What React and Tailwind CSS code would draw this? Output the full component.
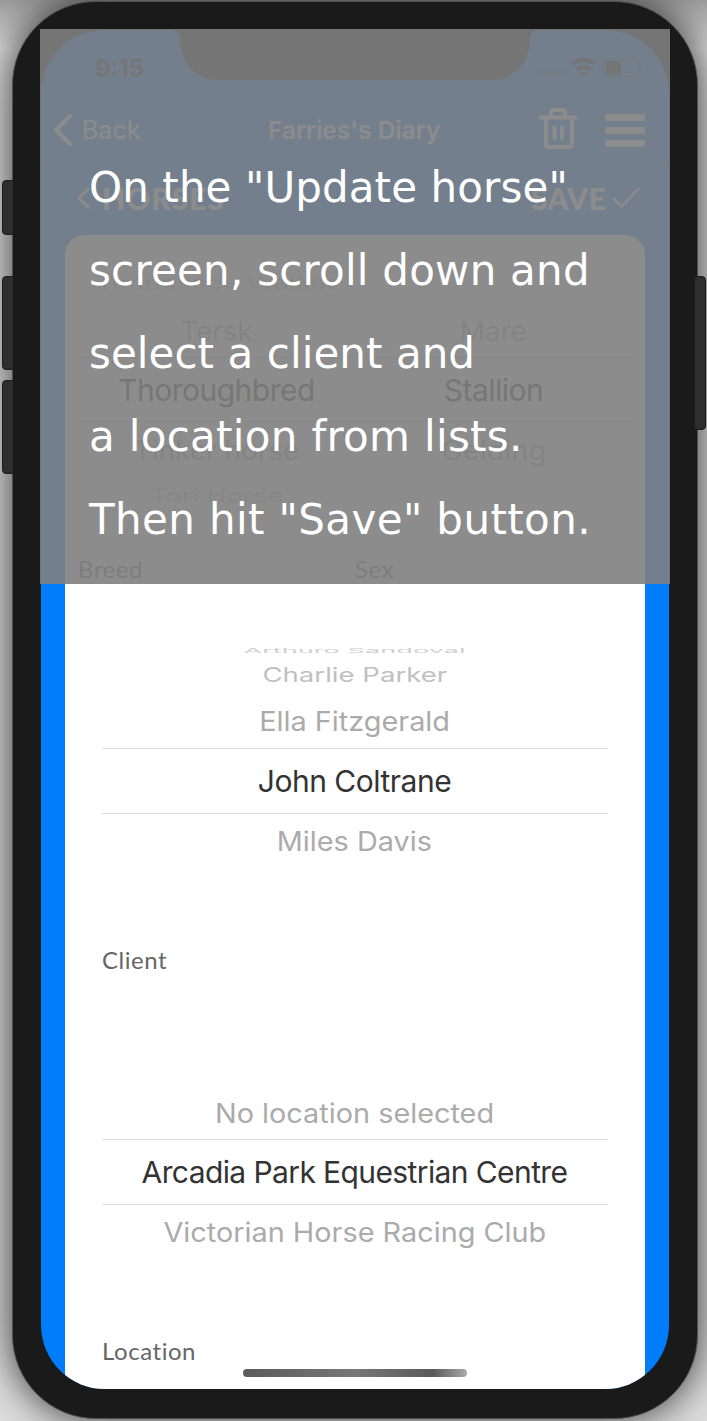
import React from "react";

const sf = "font-['Inter',sans-serif]";
const label = "font-['Lato',sans-serif] text-[24px] leading-none tracking-[0.55px] [font-variant-ligatures:none] text-[#666]";
const near = "scale-x-[1.03] scale-y-[0.96]";

function Row({ h, className = "", children }) {
  return (
    <div className={`flex shrink-0 items-center justify-center whitespace-nowrap ${h}`}>
      <span className={`block ${className}`}>{children}</span>
    </div>
  );
}

function Notch() {
  return (
    <svg className="absolute left-[129px] top-0" width="370" height="50" viewBox="0 0 370 50">
      <path d="M0 0C7 0 10 3 10 9C10 32 25 50 47 50H322C345 50 360 32 360 9C360 3 363 0 370 0Z" fill="#1a1a1a" />
    </svg>
  );
}

function StatusBar() {
  return (
    <div className="relative flex h-[67px] shrink-0 items-center justify-between pl-[54px] pr-[24px] pt-[9px] text-[#1a1a1a]">
      <Notch />
      <span className={`text-[24.500px] font-semibold leading-none ${sf}`}>9:15</span>
      <svg width="110" height="22" viewBox="0 0 110 22" fill="none">
        <g fill="#1a5488">
          <circle cx="3.5" cy="16" r="2.5" /><circle cx="11.5" cy="16" r="2.5" />
          <circle cx="19.5" cy="16" r="2.5" /><circle cx="27.5" cy="16" r="2.5" />
        </g>
        <g stroke="#1a1a1a" strokeWidth="4">
          <path d="M37.500 7.500A16 16 0 0 1 59.500 7.500" />
          <path d="M42 12.500A9.500 9.500 0 0 1 55 12.500" />
        </g>
        <path d="M45 16A5 5 0 0 1 52 16L48.500 19.500Z" fill="#1a1a1a" />
        <rect x="68.500" y="2" width="35" height="17.500" rx="4" stroke="#1a4a70" strokeWidth="1.500" />
        <rect x="71" y="4" width="15" height="13.500" rx="2" fill="#1a1a1a" />
        <path d="M105.500 8Q109 10.500 105.500 13.500Z" fill="#1a4a70" />
      </svg>
    </div>
  );
}

function NavBar() {
  return (
    <div className={`flex h-[67px] shrink-0 items-center border-b border-[#508ab8] text-white ${sf}`}>
      <svg className="ml-[12px] mr-[9px]" width="20" height="34" viewBox="0 0 20 34" fill="none" stroke="currentColor" strokeWidth="4" strokeLinecap="round" strokeLinejoin="round">
        <path d="M17 3L3 17L17 31" />
      </svg>
      <span className="w-[186px] text-[25px] leading-none">Back</span>
      <span className="w-[271px] whitespace-nowrap text-[24.500px] font-semibold leading-none">Farries's Diary</span>
      <svg className="-mt-[4px]" width="38" height="44" viewBox="0 0 38 44" fill="none" stroke="currentColor" strokeWidth="4" strokeLinecap="round" strokeLinejoin="round">
        <path d="M2 11.500H36M7 11.500V38Q7 41 10 41H30Q33 41 33 38V11.500M12 10V7Q12 4 15 4H23Q26 4 26 7V10M15.500 21.500V32.500M23 21.500V32.500" />
      </svg>
      <div className="ml-[28px] flex flex-col gap-[6px]">
        <div className="h-[7px] w-[40px] rounded-[2px] bg-white" />
        <div className="h-[7px] w-[40px] rounded-[2px] bg-white" />
        <div className="h-[7px] w-[40px] rounded-[2px] bg-white" />
      </div>
    </div>
  );
}

function ActionBar() {
  return (
    <div className="flex h-[71px] shrink-0 items-center justify-between pb-[4px] pl-[36px] pr-[29px] font-['Lato',sans-serif] text-[30px] font-black leading-none text-white">
      <div className="flex items-center gap-[12px]">
        <svg width="13" height="22" viewBox="0 0 13 22" fill="none" stroke="currentColor" strokeWidth="2.500" strokeLinecap="round"><path d="M11.500 1.500L2 11L11.500 20.500" /></svg>
        <span className="tracking-[0.9px]">HORSES</span>
      </div>
      <div className="flex items-center gap-[6px]">
        <span className="tracking-[0.3px]">SAVE</span>
        <svg width="28" height="22" viewBox="0 0 28 22" fill="none" stroke="currentColor" strokeWidth="2.500" strokeLinecap="round"><path d="M2 12L9.500 19.500L26.500 2" /></svg>
      </div>
    </div>
  );
}

function Caption() {
  return (
    <div className="absolute left-[40px] top-[29px] h-[555px] w-[630px] bg-[#7f7f7f]/90 pl-[49px] pt-[117px] font-['DejaVu_Sans',sans-serif] text-[42px] leading-[83px] text-white">
      <p className="whitespace-nowrap tracking-[0.1px]">On the "Update horse"</p>
      <p className="whitespace-nowrap tracking-[0.22px]">screen, scroll down and</p>
      <p className="whitespace-nowrap tracking-[0.06px]">select a client and</p>
      <p className="whitespace-nowrap tracking-[0.3px]">a location from lists.</p>
      <p className="whitespace-nowrap tracking-[0.38px]">Then hit "Save" button.</p>
    </div>
  );
}

const sideKey = "absolute w-[14px] rounded-[4px] border border-[#1c1c1c] bg-[#2e2e2e]";

export default function App() {
  return (
    <div className="relative flex h-[1421px] w-[707px] overflow-hidden bg-[#dedede] bg-[linear-gradient(180deg,#9c9c9c_0px,#dedede_50px)]">
      <div className="relative ml-[12px] mt-[1px] h-[1418px] w-[686px] rounded-[84px] border border-[#505050] bg-[#1a1a1a] pl-[28px] pt-[28px] shadow-[0_0_42px_rgba(0,0,0,0.78)]">
        <div className="relative flex h-[1359px] w-[628px] flex-col overflow-hidden rounded-[64px] bg-[#007dfa]">
          <StatusBar />
          <NavBar />
          <ActionBar />

          <div className={`mx-[24px] flex grow flex-col rounded-t-[20px] bg-white ${sf}`}>
            <div className="mx-[13px] flex h-[312px] shrink-0 flex-col">
              <div className="grid h-[122px] shrink-0 grid-cols-2 text-[28px] text-[#a6a6a6]">
                <div className="flex flex-col pt-[36px]">
                  <Row h="h-[24px]" className="scale-y-[0.6] text-[#c4c4c4]">Tennessee Walker</Row>
                  <Row h="h-[71px]" className="scale-y-[0.96]">Tersk</Row>
                </div>
                <div className="flex flex-col pt-[60px]">
                  <Row h="h-[71px]" className="scale-y-[0.96]">Mare</Row>
                </div>
              </div>
              <div className="grid h-[65px] shrink-0 grid-cols-2 border-y border-[#d8d8d8] text-[30px] tracking-[-0.5px] text-[#222]">
                <Row h="h-[65px]">Thoroughbred</Row>
                <Row h="h-[65px]">Stallion</Row>
              </div>
              <div className="grid grid-cols-2 text-[28px] text-[#a6a6a6]">
                <div className="flex flex-col">
                  <Row h="h-[56px]" className="scale-y-[0.96]">Tinker horse</Row>
                  <Row h="h-[34px]" className="scale-x-[0.97] scale-y-[0.65] text-[#c4c4c4]">Tori Horse</Row>
                </div>
                <div><Row h="h-[56px]" className={near}>Gelding</Row></div>
              </div>
            </div>
            <div className={`mx-[13px] grid h-[44px] shrink-0 grid-cols-2 items-center ${label}`}>
              <span>Breed</span><span>Sex</span>
            </div>

            <div className="mx-[36px] flex h-[350px] shrink-0 flex-col pl-px pr-[2px] pt-[56px]">
              <div className="mb-[4px] h-[7px] shrink-0 text-[28px] text-[#cfcfcf]">
                <Row h="h-[7px]" className="scale-x-[0.97] scale-y-[0.24]">Arthuro Sandoval</Row>
              </div>
              <Row h="h-[34px]" className="scale-x-[0.985] scale-y-[0.7] text-[28px] text-[#c0c0c0]">Charlie Parker</Row>
              <Row h="h-[56px]" className={`${near} pt-[2px] text-[28px] text-[#ababab]`}>Ella Fitzgerald</Row>
              <div className="-mr-px h-[66px] shrink-0 border-y border-[#dcdcdc] pr-px text-[30px] tracking-[-0.5px] text-[#333]">
                <Row h="h-[64px]">John Coltrane</Row>
              </div>
              <Row h="h-[54px]" className={`${near} text-[28px] text-[#ababab]`}>Miles Davis</Row>
            </div>
            <div className={`mx-[37px] flex h-[38px] shrink-0 items-center ${label}`}>Client</div>

            <div className="mx-[36px] flex h-[352px] shrink-0 flex-col pl-px pr-[2px] pt-[106px]">
              <Row h="h-[54px]" className={`${near} pt-[2px] text-[28px] text-[#ababab]`}>No location selected</Row>
              <div className="-mr-px h-[66px] shrink-0 border-y border-[#dcdcdc] pr-px text-[30px] tracking-[-0.6px] text-[#333]">
                <Row h="h-[65px]">Arcadia Park Equestrian Centre</Row>
              </div>
              <Row h="h-[54px]" className={`${near} text-[28px] text-[#ababab]`}>Victorian Horse Racing Club</Row>
            </div>
            <div className={`mx-[37px] flex h-[40px] shrink-0 items-center ${label}`}>Location</div>
          </div>
          <div className="absolute left-[202px] top-[1339px] h-[8px] w-[224px] rounded-full bg-[linear-gradient(90deg,#5a5a5a_0%,#777_50%,#5a5a5a_85%,#aaa_100%)]" />
        </div>
      </div>
      <div className={`${sideKey} left-[2px] top-[180px] h-[55px] [clip-path:inset(0_3px_0_0)]`} />
      <div className={`${sideKey} left-[2px] top-[276px] h-[94px] [clip-path:inset(0_3px_0_0)]`} />
      <div className={`${sideKey} left-[2px] top-[380px] h-[94px] [clip-path:inset(0_3px_0_0)]`} />
      <div className={`${sideKey} left-[692px] top-[276px] h-[154px] [clip-path:inset(0_0_0_3px)]`} />
      <Caption />
    </div>
  );
}
